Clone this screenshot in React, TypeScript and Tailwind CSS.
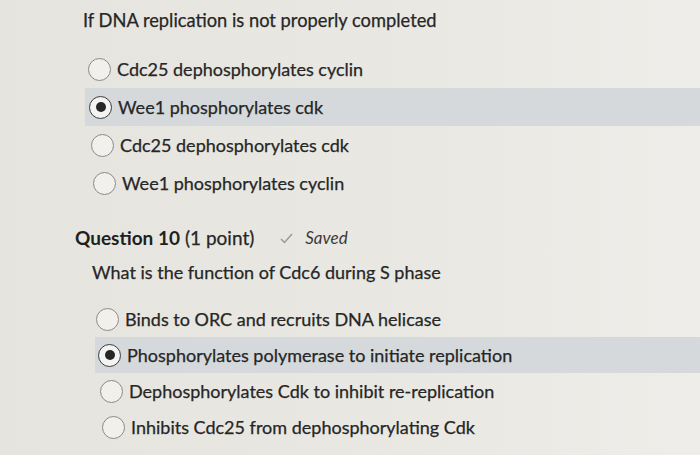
import React from "react";

type Opt = { text: string; selected?: boolean; shift: number };

function Radio({ selected }: { selected?: boolean }) {
  return selected ? (
    <span className="flex h-[23px] w-[23px] shrink-0 items-center justify-center rounded-full border-[1.5px] border-[#3a3a3a] bg-[#f3f3f1]">
      <span className="h-[10px] w-[10px] rounded-full bg-[#262626]" />
    </span>
  ) : (
    <span className="h-[23px] w-[23px] shrink-0 rounded-full border-[1.5px] border-[#8a8a8a] bg-[#f1f0ec]" />
  );
}

function Options({ opts, rowH }: { opts: Opt[]; rowH: string }) {
  return (
    <div className="flex flex-col">
      {opts.map((o, i) => (
        <div key={i} className={`flex items-center ${rowH} ${o.selected ? "bg-[#d5d9db]" : ""}`}>
          <div className="flex items-center gap-[6px]" style={{ paddingLeft: o.shift }}>
            <Radio selected={o.selected} />
            <span className="text-[18px] text-[#262626] [-webkit-text-stroke:0.25px_#262626]">{o.text}</span>
          </div>
        </div>
      ))}
    </div>
  );
}

export default function App() {
  const q1: Opt[] = [
    { text: "Cdc25 dephosphorylates cyclin", shift: 3 },
    { text: "Wee1 phosphorylates cdk", selected: true, shift: 4 },
    { text: "Cdc25 dephosphorylates cdk", shift: 6 },
    { text: "Wee1 phosphorylates cyclin", shift: 8 },
  ];
  const q2: Opt[] = [
    { text: "Binds to ORC and recruits DNA helicase", shift: 1 },
    { text: "Phosphorylates polymerase to initiate replication", selected: true, shift: 3 },
    { text: "Dephosphorylates Cdk to inhibit re-replication", shift: 5 },
    { text: "Inhibits Cdc25 from dephosphorylating Cdk", shift: 7 },
  ];
  return (
    <div className="h-[455px] w-[700px] overflow-hidden bg-[linear-gradient(90deg,#e5e4de_0%,#e9e8e3_60%,#eeede9_100%)] font-['Lato',sans-serif] text-[#262626]">
      <div className="pl-[83px] pt-[7px] text-[18.3px] leading-[27px] [-webkit-text-stroke:0.25px_#262626]">
        If DNA replication is not properly completed
      </div>
      <div className="mt-[16px] pl-[85px]">
        <Options opts={q1} rowH="h-[38px]" />
      </div>
      <div className="mt-[22px] flex items-center pl-[75px] text-[19px] leading-[28px]">
        <span className="font-bold text-[#1f1f1f]">Question 10</span>
        <span className="ml-[5px] [-webkit-text-stroke:0.25px_#262626]">(1 point)</span>
        <svg className="ml-[26px]" width="13" height="11" viewBox="0 0 13 11">
          <path d="M1 6 L4.5 9.5 L12 1" fill="none" stroke="#9a9a9a" strokeWidth="1.5" />
        </svg>
        <span className="ml-[12px] text-[17px] italic text-[#3a3a3a]">Saved</span>
      </div>
      <div className="mt-[7px] pl-[92px] text-[18px] leading-[27px] [-webkit-text-stroke:0.25px_#262626]">
        What is the function of Cdc6 during S phase
      </div>
      <div className="mt-[15px] pl-[95px]">
        <Options opts={q2} rowH="h-[36px]" />
      </div>
    </div>
  );
}
